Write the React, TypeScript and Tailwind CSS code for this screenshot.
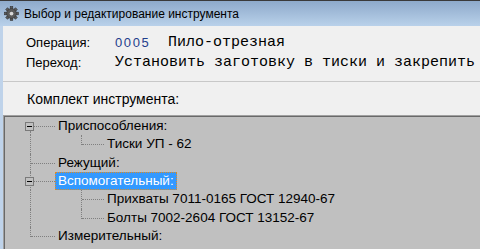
import React from 'react';

type TreeRow = {
  label: string;
  level: 0 | 1;
  box?: boolean;
  selected?: boolean;
  childLine?: 'mid' | 'last';
};

const rows: TreeRow[] = [
  { label: 'Приспособления:', level: 0, box: true },
  { label: 'Тиски УП - 62', level: 1, childLine: 'last' },
  { label: 'Режущий:', level: 0 },
  { label: 'Вспомогательный:', level: 0, box: true, selected: true },
  { label: 'Прихваты 7011-0165 ГОСТ 12940-67', level: 1, childLine: 'mid' },
  { label: 'Болты 7002-2604 ГОСТ 13152-67', level: 1, childLine: 'last' },
  { label: 'Измерительный:', level: 0 },
];

function Gear() {
  return (
    <svg width="15" height="15" viewBox="0 0 16 16" className="shrink-0">
      <g fill="#5a5a5a" stroke="#2e2e2e" strokeWidth="0.6">
        {[0, 45, 90, 135, 180, 225, 270, 315].map(a => (
          <rect key={a} x="6.6" y="0.6" width="2.8" height="4" transform={`rotate(${a} 8 8)`} />
        ))}
        <circle cx="8" cy="8" r="5.2" />
      </g>
      <circle cx="8" cy="8" r="2" fill="#d8d8d8" />
    </svg>
  );
}

function Row({ row, index }: { row: TreeRow; index: number }) {
  const isLast = index === rows.length - 1;
  return (
    <div className="relative h-[18.33px] flex items-center">
      {/* root vertical line */}
      <span
        className={`absolute left-[25px] w-0 border-l border-dotted border-[#808080] ${
          index === 0 ? 'top-[14px] bottom-0' : isLast ? 'top-0 h-[10px]' : 'top-0 bottom-0'
        }`}
      />
      {row.level === 0 && (
        <>
          <span className="absolute left-[26px] top-[9px] w-[24px] h-0 border-t border-dotted border-[#808080]" />
          {row.box && (
            <span className="absolute left-[20px] top-[5px] w-[9px] h-[9px] border border-[#7a7a7a] bg-[#c0c0c0] flex items-center justify-center">
              <span className="w-[5px] h-[1px] bg-black" />
            </span>
          )}
        </>
      )}
      {row.level === 1 && (
        <>
          <span
            className={`absolute left-[76px] w-0 border-l border-dotted border-[#808080] ${
              row.childLine === 'last' ? 'top-0 h-[10px]' : 'top-0 bottom-0'
            }`}
          />
          <span className="absolute left-[77px] top-[9px] w-[22px] h-0 border-t border-dotted border-[#808080]" />
        </>
      )}
      {row.selected ? (
        <span className="ml-[50px] h-[18px] px-[2px] flex items-center bg-[#3399ff] text-white border border-dotted border-[#e08a20]">
          {row.label}
        </span>
      ) : (
        <span className={row.level === 0 ? 'ml-[53px]' : 'ml-[102px]'}>{row.label}</span>
      )}
    </div>
  );
}

export default function App() {
  return (
    <div className="w-[480px] h-[249px] overflow-hidden bg-[#f0f0f0] font-['Liberation_Sans',Arial,sans-serif] text-black">
      <div className="h-[26px] border-t border-[#3a3a3a] bg-gradient-to-b from-[#8eaacb] to-[#b9d1ea] flex items-center gap-[5px] pl-[4px]">
        <Gear />
        <span className="text-[12px] text-black">Выбор и редактирование инструмента</span>
      </div>
      <div className="border-l-[3px] border-[#bfd3ea] h-[223px] flex flex-col">
        <div className="pt-[7px] text-[13px]">
          <div className="h-[20px] flex items-center">
            <span className="ml-[23px] w-[89px]">Операция:</span>
            <span className="w-[53px] text-[#1f3e8c] tracking-[1.6px]">0005</span>
            <span className="font-['Liberation_Mono','Courier_New',monospace] text-[15px] whitespace-nowrap">Пило-отрезная</span>
          </div>
          <div className="h-[20px] flex items-center">
            <span className="ml-[23px] w-[89px]">Переход:</span>
            <span className="font-['Liberation_Mono','Courier_New',monospace] text-[15px] whitespace-nowrap">
              Установить заготовку в тиски и закрепить
            </span>
          </div>
        </div>
        <div className="mt-[8px] border-t border-[#c8c8c8]" />
        <div className="h-[33px] flex items-center text-[14px] pl-[24px] pt-[1px]">Комплект инструмента:</div>
        <div className="flex-1 border-t border-l border-[#a0a0a0]">
          <div className="h-full border-t border-l border-[#696969] bg-[#c0c0c0] text-[13.5px]">
            {rows.map((r, i) => (
              <Row key={i} row={r} index={i} />
            ))}
          </div>
        </div>
      </div>
    </div>
  );
}
